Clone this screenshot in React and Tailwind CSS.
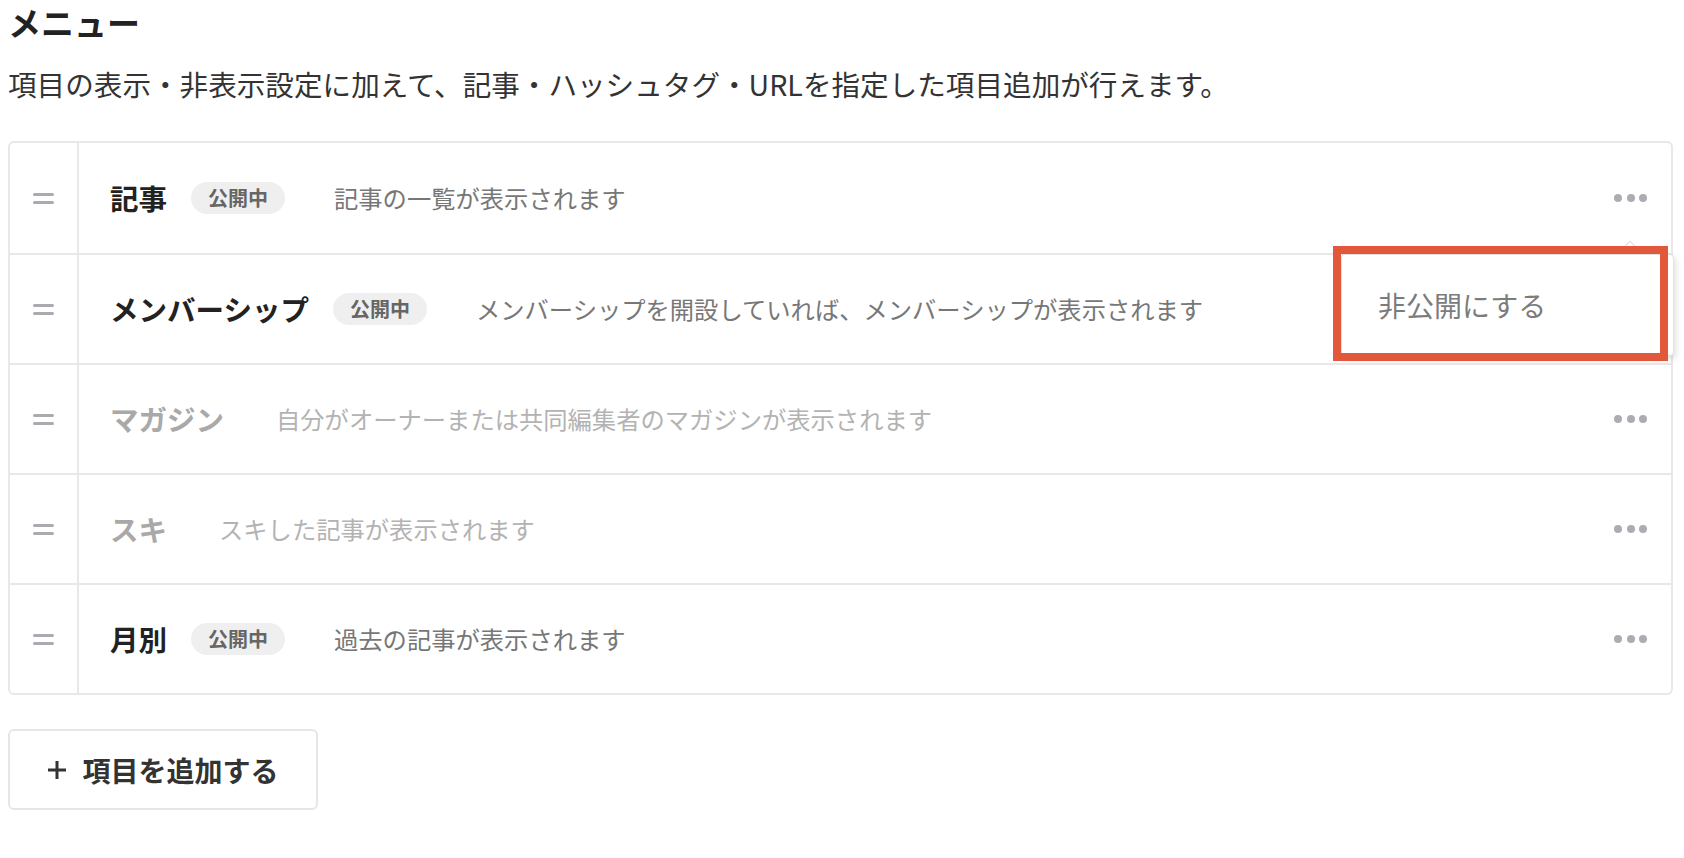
import React from "react";

const items = [
  { title: "記事", desc: "記事の一覧が表示されます", public: true },
  {
    title: "メンバーシップ",
    desc: "メンバーシップを開設していれば、メンバーシップが表示されます",
    public: true,
  },
  { title: "マガジン", desc: "自分がオーナーまたは共同編集者のマガジンが表示されます", public: false },
  { title: "スキ", desc: "スキした記事が表示されます", public: false },
  { title: "月別", desc: "過去の記事が表示されます", public: true },
];

function Handle() {
  return (
    <div className="flex w-[21px] flex-col gap-[5px]">
      <span className="h-[3px] rounded-full bg-[#aaaab0]" />
      <span className="h-[3px] rounded-full bg-[#aaaab0]" />
    </div>
  );
}

function Dots() {
  return (
    <div className="flex items-center gap-[4.5px]">
      <span className="h-2 w-2 rounded-full bg-[#acacb2]" />
      <span className="h-2 w-2 rounded-full bg-[#acacb2]" />
      <span className="h-2 w-2 rounded-full bg-[#acacb2]" />
    </div>
  );
}

function Row({ item }) {
  return (
    <div className="flex h-[110px] border-t-2 border-[#e8e8e8] first:border-t-0">
      <div className="flex w-[69px] shrink-0 items-center justify-center border-r-2 border-[#e8e8e8]">
        <Handle />
      </div>
      <div className="flex flex-1 items-center pl-[31px] pr-6">
        <span
          className={
            "mr-6 text-[28.5px] font-bold " +
            (item.public ? "text-[#222]" : "text-[#a9a9a9]")
          }
        >
          {item.title}
        </span>
        {item.public && (
          <span className="mr-[21px] flex h-[32px] items-center rounded-full bg-[#efefef] px-[17px] text-[20px] font-bold text-[#666]">
            公開中
          </span>
        )}
        <span
          className={
            "ml-[28px] text-[24.3px] " +
            (item.public ? "text-[#777]" : "text-[#b3b3b3]")
          }
        >
          {item.desc}
        </span>
        <div className="ml-auto">
          <Dots />
        </div>
      </div>
    </div>
  );
}

export default function App() {
  return (
    <div className="min-h-screen bg-white px-2 pt-[2px] font-['Noto_Sans_CJK_JP','Noto_Sans',sans-serif]">
      <h2 className="text-[33px] font-bold leading-[40px] text-[#222]">メニュー</h2>
      <p className="mt-[22px] text-[28.6px] leading-[40px] text-[#333]">
        項目の表示・非表示設定に加えて、記事・ハッシュタグ・URLを指定した項目追加が行えます。
      </p>

      <div className="relative mt-[37px] w-[1665px] rounded-[6px] border-2 border-[#e8e8e8]">
        {items.map((item) => (
          <Row key={item.title} item={item} />
        ))}

        {/* menu popup for the first row */}
        <div className="absolute left-[1614px] top-[100px] h-3 w-3 rotate-45 border-l border-t border-[#dedede] bg-white" />
        <div className="absolute left-[1331px] top-[111px] flex h-[102px] w-[333px] items-center rounded-[4px] border border-[#e2e2e2] bg-white pl-9 shadow-[2px_3px_6px_rgba(0,0,0,0.12)]">
          <span className="text-[28px] text-[#7c7c7c]">非公開にする</span>
        </div>
        <div className="absolute left-[1323px] top-[103px] h-[115px] w-[335px] border-[8px] border-[#e2583a]" />
      </div>

      <button className="mt-[34px] flex h-[81px] w-[310px] items-center justify-center gap-[15px] rounded-[6px] border-2 border-[#e6e6e6] bg-white text-[28px] font-bold text-[#333]">
        <svg width="20" height="20" viewBox="0 0 20 20" fill="none">
          <path d="M10 1v18M1 10h18" stroke="#333" strokeWidth="3" />
        </svg>
        項目を追加する
      </button>
    </div>
  );
}
